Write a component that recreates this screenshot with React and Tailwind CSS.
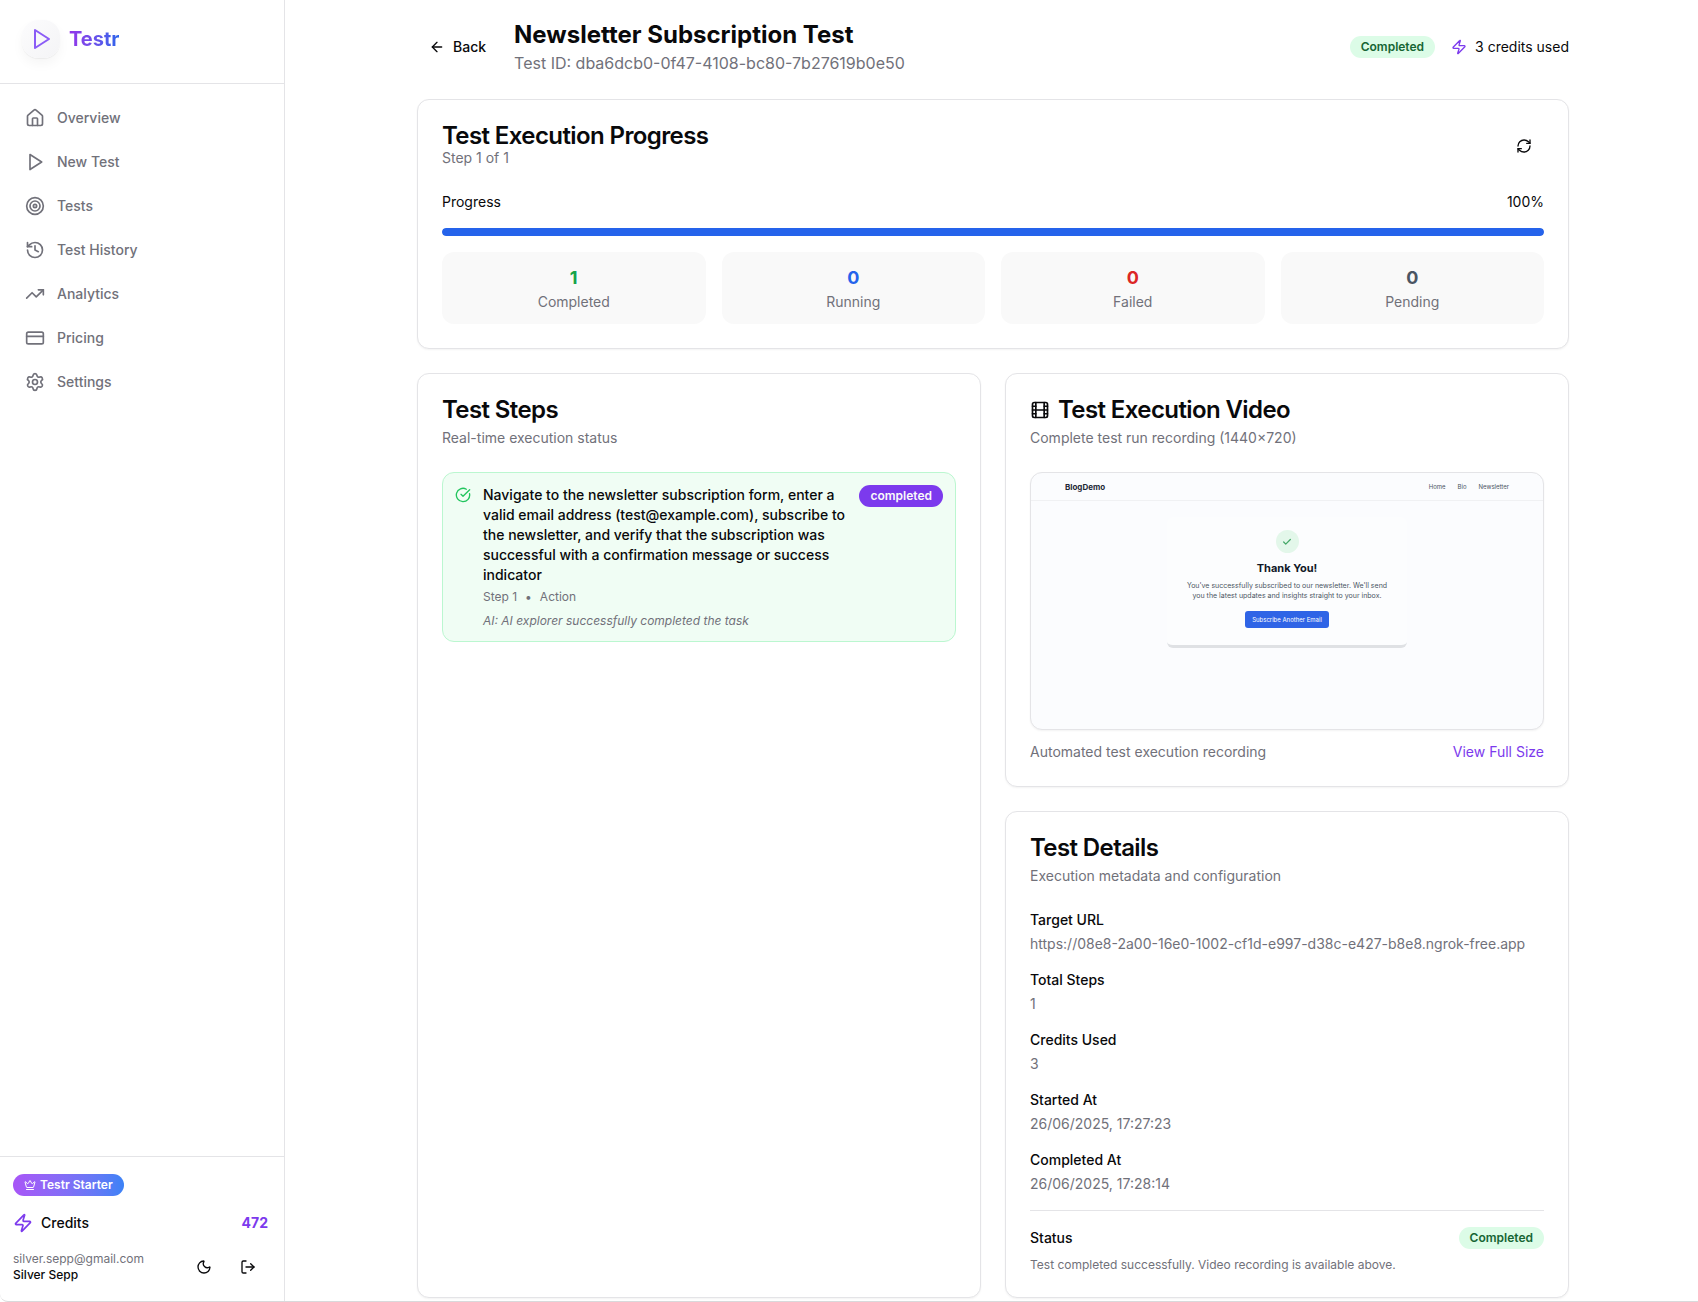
import {
  ArrowLeft,
  Check,
  CircleCheckBig,
  CreditCard,
  Crown,
  Film,
  History,
  House,
  LogOut,
  Moon,
  RefreshCw,
  Settings,
  Target,
  TrendingUp,
  Zap,
} from 'lucide-react'

const PlayIcon = ({ size = 24, className = '' }) => (
  <svg
    width={size}
    height={size}
    viewBox="0 0 24 24"
    fill="none"
    stroke="currentColor"
    strokeWidth="2"
    strokeLinecap="round"
    strokeLinejoin="round"
    className={className}
    aria-hidden="true"
  >
    <polygon points="6 3 20 12 6 21 6 3" />
  </svg>
)

const navItems = [
  { label: 'Overview', icon: House },
  { label: 'New Test', icon: PlayIcon },
  { label: 'Tests', icon: Target },
  { label: 'Test History', icon: History },
  { label: 'Analytics', icon: TrendingUp },
  { label: 'Pricing', icon: CreditCard },
  { label: 'Settings', icon: Settings },
]

const stats = [
  { label: 'Completed', value: 1, color: 'text-[#16a34a]' },
  { label: 'Running', value: 0, color: 'text-[#2563eb]' },
  { label: 'Failed', value: 0, color: 'text-[#dc2626]' },
  { label: 'Pending', value: 0, color: 'text-[#4b5563]' },
]

const details = [
  { label: 'Target URL', value: 'https://08e8-2a00-16e0-1002-cf1d-e997-d38c-e427-b8e8.ngrok-free.app' },
  { label: 'Total Steps', value: '1' },
  { label: 'Credits Used', value: '3' },
  { label: 'Started At', value: '26/06/2025, 17:27:23' },
  { label: 'Completed At', value: '26/06/2025, 17:28:14' },
]

const Card = ({ className = '', children }) => (
  <section className={`rounded-xl border border-[#e4e4e7] bg-white p-6 shadow-xs ${className}`}>
    {children}
  </section>
)

const CardHeader = ({ title, description, icon: Icon }) => (
  <div className="mb-6 flex flex-col gap-1.5">
    <h2 className="flex items-center gap-2 text-2xl leading-6 font-semibold tracking-tight">
      {Icon && <Icon size={20} />}
      {title}
    </h2>
    <p className="text-sm text-[#71717a]">{description}</p>
  </div>
)

const StatusBadge = ({ className, children }) => (
  <span className={`inline-flex h-[22px] shrink-0 items-center gap-1 rounded-full px-[11px] text-xs font-semibold ${className}`}>
    {children}
  </span>
)

const Sidebar = () => (
  <aside className="mr-[3px] flex w-[285px] shrink-0 flex-col border-r border-[#e4e4e7]">
    <div className="flex h-21 items-start gap-[9px] border-b border-[#e4e4e7] pt-5 pl-[22px]">
      <div className="flex size-[38px] items-center justify-center rounded-2xl bg-linear-to-br from-[#fcfcfd] to-[#f4f4f6] shadow-[0_1px_1px_rgba(0,0,0,0.05),0_6px_12px_rgba(0,0,0,0.04)]">
        <PlayIcon size={24} className="text-[#8b5cf6]" />
      </div>
      <span className="bg-linear-to-r from-[#9333ea] to-[#2563eb] bg-clip-text text-xl leading-[38px] font-bold text-transparent">
        Testr
      </span>
    </div>

    <nav className="flex flex-1 flex-col gap-2 py-4 pr-4 pl-[13px]">
      {navItems.map(({ label, icon: Icon }) => (
        <a
          key={label}
          href="#"
          className="flex items-center gap-3 rounded-lg px-3 py-2 text-sm font-medium text-[#71717a]"
        >
          <Icon size={20} />
          {label}
        </a>
      ))}
    </nav>

    <div className="border-t border-[#e4e4e7] pt-4 pr-4 pb-3.5 pl-[13px]">
      <div className="flex h-6 items-center">
        <StatusBadge className="bg-linear-to-r from-[#a855f7] to-[#3b82f6] text-white">
          <Crown size={12} />
          Testr Starter
        </StatusBadge>
      </div>
      <div className="mt-4 flex items-center justify-between text-sm font-medium">
        <span className="flex items-center gap-2">
          <Zap size={20} className="text-[#7c3aed]" />
          Credits
        </span>
        <span className="font-bold text-[#7c3aed]">472</span>
      </div>
      <div className="mt-3.5 flex items-center justify-between">
        <div className="text-xs">
          <p className="text-[#71717a]">silver.sepp@gmail.com</p>
          <p className="font-medium">Silver Sepp</p>
        </div>
        <div className="flex gap-1">
          <button type="button" aria-label="Toggle theme" className="flex size-10 items-center justify-center rounded-md">
            <Moon size={16} />
          </button>
          <button type="button" aria-label="Log out" className="flex size-10 items-center justify-center rounded-md">
            <LogOut size={16} />
          </button>
        </div>
      </div>
    </div>
  </aside>
)

// Last frame of the recorded run
const RecordingPreview = () => (
  <div className="aspect-[514/258] overflow-hidden rounded-xl border border-[#e4e4e7] bg-[#fbfcfe] text-[#4b5563] shadow-xs">
    <div className="flex h-7 items-center justify-between border-b border-[#f0f1f3] px-[34px]">
      <span className="text-[8px] leading-none font-bold text-[#1f2937]">BlogDemo</span>
      <div className="flex gap-3 text-[6px] leading-none">
        <span>Home</span>
        <span>Bio</span>
        <span>Newsletter</span>
      </div>
    </div>
    <div className="mx-auto mt-4 flex h-[131px] w-60 flex-col items-center rounded-md border-b-3 border-[#dfe1e4] bg-[#fcfdfe] pt-[13px]">
      <div className="flex size-[23px] items-center justify-center rounded-full bg-[#e3f7ea]">
        <Check size={10} strokeWidth={3} className="text-[#45a868]" />
      </div>
      <p className="mt-[7px] text-[11px] leading-4 font-bold text-[#111827]">Thank You!</p>
      <p className="mt-[5px] text-center text-[7px] leading-[10px]">
        You've successfully subscribed to our newsletter. We'll send
        <br />
        you the latest updates and insights straight to your inbox.
      </p>
      <button type="button" className="mt-2.5 h-[17px] w-[84px] rounded-[3px] bg-[#2f64e6] text-[6px] leading-none whitespace-nowrap text-white">
        Subscribe Another Email
      </button>
    </div>
  </div>
)

const App = () => {
  const progress = 100

  return (
    <div className="flex min-h-screen rounded-bl-lg border-b border-[#d9d9db] bg-white font-[Inter,sans-serif] text-[#09090b]">
      <Sidebar />

      <main className="min-w-0 flex-1 pt-[19px] pb-[3px]">
        <div className="mx-auto flex max-w-6xl flex-col gap-6">
          <header className="flex items-center justify-between">
            <div className="flex items-center gap-4">
              <button type="button" className="flex h-9 items-center gap-2 rounded-md px-3 text-sm font-medium">
                <ArrowLeft size={16} />
                Back
              </button>
              <div>
                <h1 className="text-2xl font-bold">Newsletter Subscription Test</h1>
                <p className="text-[#71717a]">Test ID: dba6dcb0-0f47-4108-bc80-7b27619b0e50</p>
              </div>
            </div>
            <div className="flex items-center gap-4">
              <StatusBadge className="bg-[#dcfce7] text-[#166534]">Completed</StatusBadge>
              <span className="flex items-center gap-2 text-sm">
                <Zap size={16} className="text-[#7c3aed]" />
                3 credits used
              </span>
            </div>
          </header>

          <Card>
            <div className="flex items-center justify-between">
              <div>
                <h2 className="text-2xl leading-6 font-semibold tracking-tight">Test Execution Progress</h2>
                <p className="text-sm text-[#71717a]">Step 1 of 1</p>
              </div>
              <button type="button" aria-label="Refresh" className="flex size-10 items-center justify-center rounded-md">
                <RefreshCw size={16} />
              </button>
            </div>
            <div className="mt-6 flex justify-between text-sm">
              <span>Progress</span>
              <span>{progress}%</span>
            </div>
            <div className="mt-4 h-2 overflow-hidden rounded-full bg-[#e5e7eb]">
              <div className="h-full rounded-full bg-[#2563eb]" style={{ width: `${progress}%` }} />
            </div>
            <div className="mt-4 grid grid-cols-4 gap-4">
              {stats.map(({ label, value, color }) => (
                <div key={label} className="rounded-xl bg-[#f9f9f9] p-3 text-center">
                  <p className={`text-lg font-bold ${color}`}>{value}</p>
                  <p className="text-sm text-[#71717a]">{label}</p>
                </div>
              ))}
            </div>
          </Card>

          <div className="grid grid-cols-2 gap-6">
            <Card>
              <CardHeader title="Test Steps" description="Real-time execution status" />
              <div className="flex items-start gap-3 rounded-xl border border-[#bbf7d0] bg-[#f0fdf4] p-3">
                <CircleCheckBig size={16} className="mt-0.5 shrink-0 text-[#22c55e]" />
                <div className="min-w-0 flex-1">
                  <p className="text-sm font-medium">
                    Navigate to the newsletter subscription form, enter a valid email address (test@example.com),
                    subscribe to the newsletter, and verify that the subscription was successful with a confirmation
                    message or success indicator
                  </p>
                  <p className="mt-1 flex gap-2 text-xs text-[#71717a]">
                    <span>Step 1</span>
                    <span>•</span>
                    <span>Action</span>
                  </p>
                  <p className="mt-2 text-xs text-[#71717a] italic">AI: AI explorer successfully completed the task</p>
                </div>
                <StatusBadge className="bg-[#7c3aed] text-[#fafafa]">completed</StatusBadge>
              </div>
            </Card>

            <div className="flex flex-col gap-6">
              <Card>
                <CardHeader
                  title="Test Execution Video"
                  description="Complete test run recording (1440×720)"
                  icon={Film}
                />
                <RecordingPreview />
                <div className="mt-3 flex justify-between text-sm">
                  <span className="text-[#71717a]">Automated test execution recording</span>
                  <a href="#" className="text-[#7c3aed]">View Full Size</a>
                </div>
              </Card>

              <Card>
                <CardHeader title="Test Details" description="Execution metadata and configuration" />
                <dl className="flex flex-col gap-4 text-sm">
                  {details.map(({ label, value }) => (
                    <div key={label}>
                      <dt className="font-medium">{label}</dt>
                      <dd className="mt-1 break-all text-[#71717a]">{value}</dd>
                    </div>
                  ))}
                </dl>
                <div className="mt-4 border-t border-[#e4e4e7] pt-4">
                  <div className="flex items-center justify-between">
                    <span className="text-sm font-medium">Status</span>
                    <StatusBadge className="bg-[#dcfce7] text-[#166534]">Completed</StatusBadge>
                  </div>
                  <p className="mt-2 text-xs text-[#71717a]">
                    Test completed successfully. Video recording is available above.
                  </p>
                </div>
              </Card>
            </div>
          </div>
        </div>
      </main>
    </div>
  )
}

export default App
